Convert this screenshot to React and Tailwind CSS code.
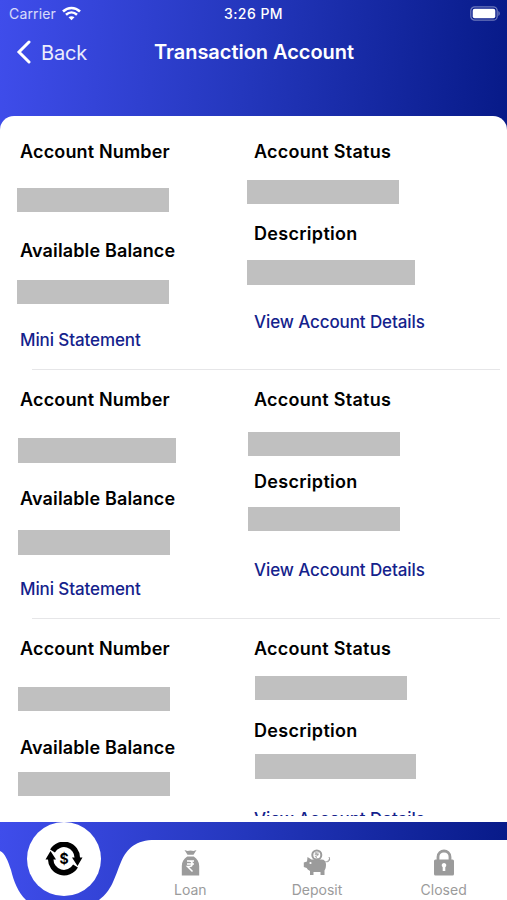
const accounts = [
  {
    id: 1,
    number: 'mt-[24.1px] ml-[0.4px] w-[152px]',
    balance: 'mt-[16.7px] ml-[0.4px] w-[152px]',
    status: 'mt-[16.1px] ml-[0.4px] w-[152px]',
    description: 'mt-[14.2px] ml-[0.4px] w-[168px]',
  },
  {
    id: 2,
    number: 'mt-[25.7px] ml-px w-[158px]',
    balance: 'mt-[18.7px] ml-px w-[152px]',
    status: 'mt-[19.6px] ml-[1px] w-[152px]',
    description: 'mt-[12.6px] ml-[1px] w-[152px]',
  },
  {
    id: 3,
    number: 'mt-[25.7px] ml-px w-[152px]',
    balance: 'mt-[12.1px] ml-px w-[152px]',
    status: 'mt-[15.1px] ml-[8px] w-[152px]',
    description: 'mt-[11.6px] ml-[8.4px] w-[161px]',
  },
];

function Title({ children, className }) {
  return (
    <h2 className={`h-6 whitespace-nowrap text-[18px] font-semibold leading-6 text-black ${className}`}>
      {children}
    </h2>
  );
}

function Link({ children }) {
  return (
    <button className="-mt-[0.6px] block h-6 whitespace-nowrap text-[17px] font-medium leading-6 tracking-[-0.1px] text-[#14228c]">
      {children}
    </button>
  );
}

function Account({ account }) {
  return (
    <div className="h-[248.5px] shrink-0 pt-[18.4px]">
      <div className="flex h-[229.2px]">
        <div className="w-[234px] pl-5">
          <Title className="tracking-[0.16px]">Account Number</Title>
          <div className="-ml-[3px] flex h-[75px] items-start">
            <div className={`h-[24.5px] bg-[#c0c0c0] ${account.number}`} />
          </div>
          <Title className="tracking-[0.14px]">Available Balance</Title>
          <div className="-ml-[3px] flex h-[66px] items-start">
            <div className={`h-[24.5px] bg-[#c0c0c0] ${account.balance}`} />
          </div>
          <Link>Mini Statement</Link>
        </div>
        <div className="pl-5">
          <Title className="tracking-[0.26px]">Account Status</Title>
          <div className="-ml-[7px] flex h-[58px] items-start">
            <div className={`h-[24.5px] bg-[#c0c0c0] ${account.status}`} />
          </div>
          <Title className="tracking-[0.3px]">Description</Title>
          <div className="-ml-[7px] flex h-[64.5px] items-start">
            <div className={`h-[24.5px] bg-[#c0c0c0] ${account.description}`} />
          </div>
          <Link>View Account Details</Link>
        </div>
      </div>
      <div className="ml-8 mr-[7px] h-px bg-[#e6e6e8]" />
    </div>
  );
}

function LoanIcon() {
  return (
    <svg width="19" height="28" viewBox="0 0 19 28" fill="#9b9b9b">
      <path d="M3.500 1l3 1 3-.6 3 .6 3-1-3 4.700h-6z" />
      <path d="M6.200 7.500h6.600c3.600 2.500 5.400 5.500 5.400 9.500v9.500H.8V17c0-4 1.800-7 5.400-9.500z" />
      <path d="M6 12h7M6 15h7M6 12h2.500c3.600 0 3.600 5.500 0 5.500H6.500l5 5" fill="none" stroke="#fff" strokeWidth="1.500" />
    </svg>
  );
}

function DepositIcon() {
  return (
    <svg width="28" height="28" viewBox="0 0 28 28" fill="#9b9b9b">
      <path d="M4.500 8l4 2.500h10c3 0 4.500 2 4.500 5 0 2.500-.5 4.500-1.500 6V26h-4v-3h-7v3H7v-4c-1.500-.8-2.800-1.800-3.300-3L.8 18v-4.500L4 12.500z" />
      <circle cx="13.800" cy="6" r="4.500" fill="#fff" stroke="#9b9b9b" strokeWidth="2" />
      <path d="M11.800 4h4M11.800 5.700h4M12.300 4c3 0 3 3.500 0 3.500l2 2" fill="none" stroke="#9b9b9b" strokeWidth=".9" />
      <circle cx="7.500" cy="14" r="1.100" fill="#fff" />
      <path d="M22.500 12.500c3.500 1 5-1.500 3.500-4.500M24.500 12l2.300-2" fill="none" stroke="#9b9b9b" strokeWidth="1" />
    </svg>
  );
}

function LockIcon() {
  return (
    <svg width="20" height="28" viewBox="0 0 20 28" fill="#9b9b9b">
      <path d="M4 12V8c0-8 12-8 12 0v4" fill="none" stroke="#9b9b9b" strokeWidth="2.800" />
      <rect y="10.500" width="20" height="16" rx="1.500" />
      <path d="M10 14a2.300 2.300 0 0 1 1.300 4.200V22H8.700v-3.800A2.300 2.300 0 0 1 10 14z" fill="#fff" />
    </svg>
  );
}

const tabs = [
  { name: 'Loan', icon: <LoanIcon /> },
  { name: 'Deposit', icon: <DepositIcon /> },
  { name: 'Closed', icon: <LockIcon /> },
];

export default function App() {
  return (
    <div className="flex h-[900px] w-[507px] flex-col overflow-hidden bg-white font-['Inter','Liberation_Sans',sans-serif]">
      <div className="h-[130px] shrink-0 bg-linear-[94deg,#3f4deb_0%,#2437bd_48%,#071a88_100%]">
        {/* Status bar */}
        <div className="grid h-[27px] grid-cols-3 items-center pl-[9px] pr-[7px] text-white">
          <div className="flex items-center gap-1.5">
            <span className="text-[14px] tracking-[0.15px] text-white/80">Carrier</span>
            <svg width="19" height="15" viewBox="0 0 19 15" fill="none" stroke="#fff" strokeWidth="2.600">
              <path d="M1 5.500c5-4.700 12-4.700 17 0M4 8.700c3.300-3 7.700-3 11 0" />
              <path d="M6.500 11.300c1.800-1.500 4.200-1.500 6 0l-3 3z" fill="#fff" stroke="none" />
            </svg>
          </div>
          <span className="-ml-0.5 text-center text-[14px] font-medium tracking-[0.45px]">3:26 PM</span>
          <svg className="justify-self-end" width="30" height="15" viewBox="0 0 30 15">
            <rect x=".8" y=".8" width="26.400" height="13.400" rx="4" fill="none" stroke="#fff" strokeOpacity=".4" strokeWidth="1.300" />
            <rect x="2.700" y="2.700" width="22.600" height="9.600" rx="2" fill="#fff" />
            <path d="M28.300 5c2 .8 2 4.200 0 5z" fill="#fff" fillOpacity=".4" />
          </svg>
        </div>

        {/* Header */}
        <header className="grid grid-cols-[1fr_auto_1fr] items-start pt-[9px] text-white">
          <button className="flex h-8 items-center gap-[9px] pl-4">
            <svg width="16" height="24" viewBox="0 0 16 24" fill="none" stroke="#fff" strokeWidth="3" strokeLinecap="round">
              <path d="M13 2L3 12l10 10" />
            </svg>
            <span className="mt-px text-[20px] tracking-[-0.2px] text-white/90">Back</span>
          </button>
          <h1 className="ml-px h-8 text-[20px] font-semibold leading-[33px] tracking-[-0.04px]">Transaction Account</h1>
        </header>
      </div>

      <main className="relative -mt-[14px] h-[706px] shrink-0 overflow-hidden rounded-t-[14px] bg-white">
        <div className="flex h-[700px] flex-col overflow-hidden pt-[5.5px]">
          {accounts.map((account) => (
            <Account key={account.id} account={account} />
          ))}
        </div>
      </main>

      {/* Bottom tabs */}
      <nav className="relative flex h-[78px] shrink-0 bg-linear-[94deg,#3f4deb_0%,#2437bd_48%,#071a88_100%]">
        <svg className="absolute inset-0" width="507" height="78" viewBox="0 0 507 78" fill="#fff">
          <path d="M0 29C5 31 8 39 11 48c3 12 7 22 15 30H0zM507 18H155c-19 0-28 8-34 22-7 17-9 28-22 38h408z" />
        </svg>
        <button className="relative ml-[27px] flex size-[74px] items-center justify-center rounded-full bg-white">
          <svg width="38" height="34" viewBox="0 0 38 34">
            <path d="M7.500 9A13.300 13.300 0 0 1 32.300 16" fill="none" stroke="#000" strokeWidth="5.500" />
            <path d="M30.500 24A13.300 13.300 0 0 1 5.700 17" fill="none" stroke="#000" strokeWidth="5.500" />
            <path d="M27 15.500h10.500L32.500 24zM.5 17.500L5.500 9l5.500 8.500z" />
            <text x="19" y="21.500" textAnchor="middle" fontSize="14" fontWeight="700">$</text>
          </svg>
        </button>
        <div className="relative ml-[26px] grid w-[380px] grid-cols-3">
          {tabs.map((tab) => (
            <button key={tab.name} className="flex flex-col items-center pt-[26.5px] text-[14px] leading-5 text-[#9b9b9b]">
              {tab.icon}
              <span className="mt-[3px]">{tab.name}</span>
            </button>
          ))}
        </div>
      </nav>
    </div>
  );
}
